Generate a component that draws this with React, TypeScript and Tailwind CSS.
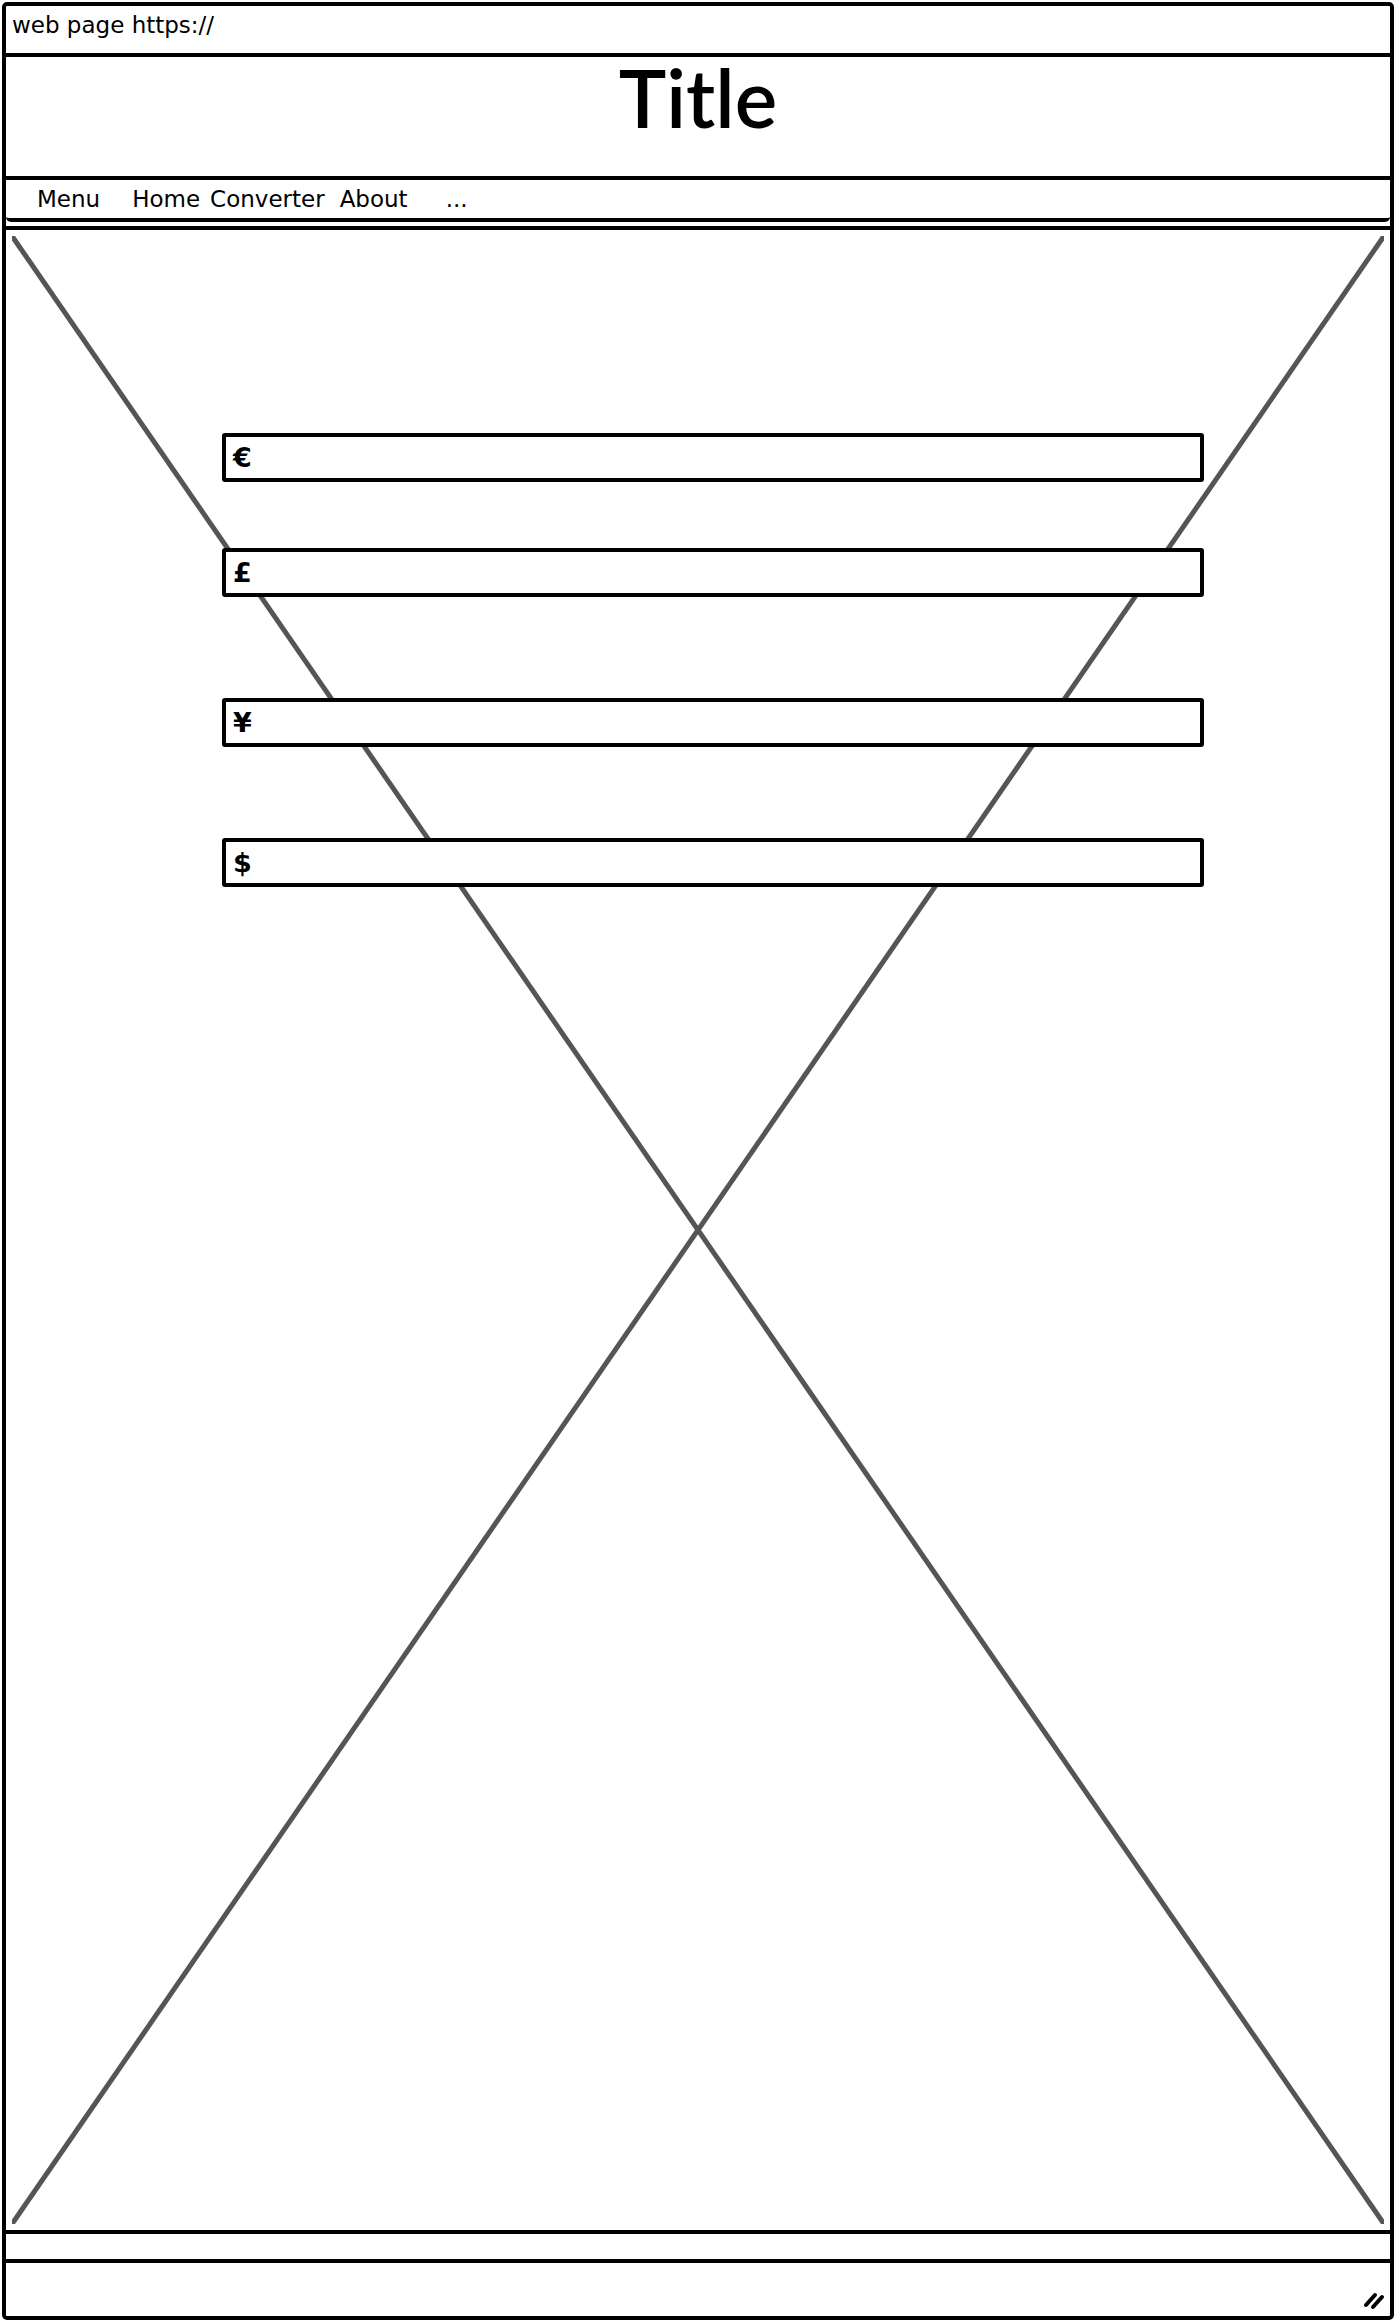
import React from "react";

// currency fields with their top spacing (px) inside the canvas
const fields = [
  { symbol: "€", mt: "mt-0" },
  { symbol: "£", mt: "mt-[66px]" },
  { symbol: "¥", mt: "mt-[101px]" },
  { symbol: "$", mt: "mt-[91px]" },
];

const navItems = [
  { label: "Menu", ml: "ml-[31px]" },
  { label: "Home", ml: "ml-[32px]" },
  { label: "Converter", ml: "ml-[10px]" },
  { label: "About", ml: "ml-[15px]" },
  { label: "...", ml: "ml-[38px]" },
];

const App = () => {
  return (
    <div
      className="w-[1396px] h-[2322px] bg-white p-[2px] text-black"
      style={{ fontFamily: "'DejaVu Sans', sans-serif" }}
    >
      <div className="flex flex-col h-full border-4 border-black rounded-[5px]">
        {/* Address bar */}
        <div className="h-[51px] shrink-0 border-b-4 border-black pl-[6px] pt-[8px]">
          <span className="text-[23px] leading-none">web page https://</span>
        </div>

        {/* Title */}
        <div className="h-[123px] shrink-0 border-b-4 border-black flex justify-center">
          <h1
            className="text-[80px] leading-none font-semibold"
            style={{ fontFamily: "Lato, sans-serif" }}
          >
            Title
          </h1>
        </div>

        {/* Nav */}
        <div className="h-[42px] shrink-0 border-b-4 border-black rounded-b-[5px] flex items-center text-[23px] leading-none">
          {navItems.map((item) => (
            <span key={item.label} className={item.ml}>
              {item.label}
            </span>
          ))}
        </div>

        {/* Main canvas */}
        <div className="mt-[4px] flex-1 border-t-4 border-b-4 border-black relative pt-[203px] pl-[216px]">
          <div className="absolute inset-[6px]">
            <svg width="100%" height="100%" className="block">
              <line x1="0" y1="0" x2="100%" y2="100%" stroke="#555" strokeWidth="5" />
              <line x1="100%" y1="0" x2="0" y2="100%" stroke="#555" strokeWidth="5" />
            </svg>
          </div>
          <div className="relative z-10 w-[982px] flex flex-col">
            {fields.map((f) => (
              <div
                key={f.symbol}
                className={`${f.mt} h-[49px] bg-white border-4 border-black rounded-[3px] flex items-center pl-[7px]`}
              >
                <span className="text-[27px] font-bold leading-none">{f.symbol}</span>
              </div>
            ))}
          </div>
        </div>

        {/* Status strip */}
        <div className="h-[29px] shrink-0 border-b-4 border-black" />

        {/* Footer */}
        <div className="h-[53px] shrink-0 flex items-end justify-end pr-[5px] pb-[6px]">
          <svg width="22" height="22" viewBox="0 0 22 22">
            <line x1="3" y1="17" x2="12" y2="7" stroke="#000" strokeWidth="4" strokeLinecap="round" />
            <line x1="10" y1="19" x2="19" y2="9" stroke="#000" strokeWidth="4" strokeLinecap="round" />
          </svg>
        </div>
      </div>
    </div>
  );
};

export default App;
